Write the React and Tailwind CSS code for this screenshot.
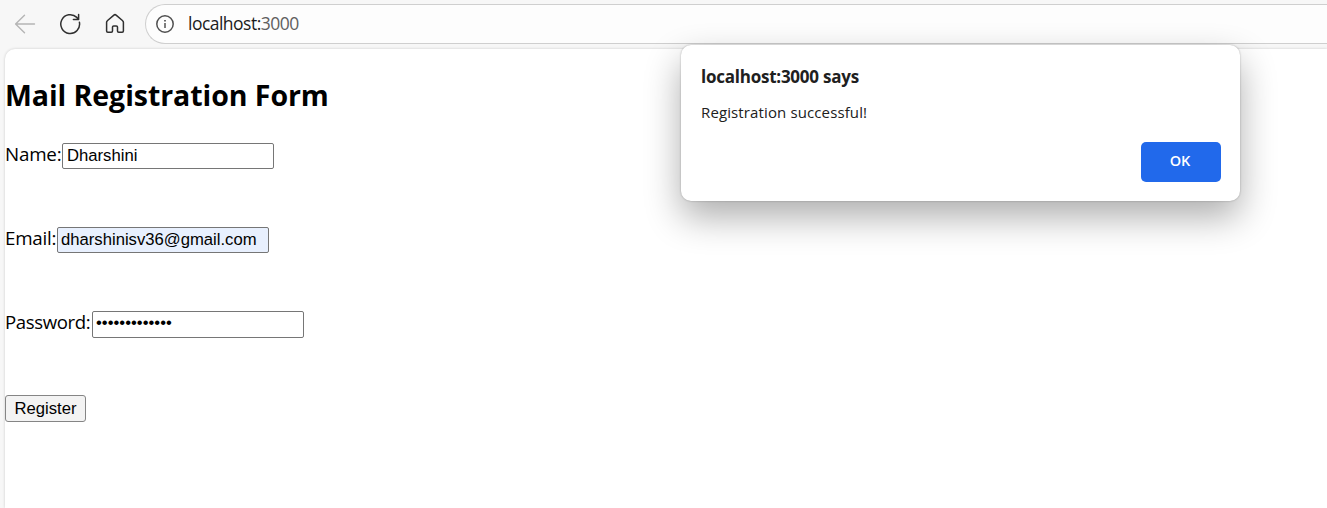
import React from "react";

function BrowserBar() {
  return (
    <header className="flex h-12 shrink-0 items-center">
      <div className="flex w-[145px] shrink-0 items-center">
        <svg className="ml-[14px] size-[22px]" viewBox="0 0 22 22" fill="none" stroke="#b5b5b5" strokeWidth="1.4" strokeLinecap="round" strokeLinejoin="round">
          <path d="M20.5 11H1.7M10.5 2.2l-8.9 8.8 8.9 8.8" />
        </svg>
        <svg className="ml-[23px] size-[22px]" viewBox="0 0 22 22" fill="none" stroke="#303030" strokeWidth="1.5" strokeLinecap="round" strokeLinejoin="round">
          <path d="M20.4 9.2A9.4 9.4 0 1 1 17.8 4.4l1.7 1.9M19.6 1.5v4.9h-5.2" />
        </svg>
        <svg className="ml-[23px] size-[22px]" viewBox="0 0 22 22" fill="none" stroke="#303030" strokeWidth="1.5" strokeLinejoin="round">
          <path d="M2.6 9.3c0-.6.2-1.1.7-1.5l6.6-5.7c.7-.6 1.5-.6 2.2 0l6.6 5.7c.5.4.7.9.7 1.5v8.7c0 .7-.5 1.2-1.2 1.2h-3.500c-.7 0-1.200-.5-1.200-1.200v-3.900c0-.7-.5-1.200-1.200-1.200H9.700c-.7 0-1.200.5-1.200 1.200v3.900c0 .7-.5 1.200-1.200 1.200H3.800c-.7 0-1.200-.5-1.200-1.200z" />
        </svg>
      </div>
      <div className="flex h-10 flex-1 items-center rounded-l-full border-y-[1.5px] border-l-[1.5px] border-[#cfcfcf] bg-[#fdfdfd] pl-[9px]">
        <svg className="size-5" viewBox="0 0 20 20" fill="none" stroke="#505050" strokeWidth="1.5">
          <circle cx="10" cy="10" r="8.2" />
          <path d="M10 9v5" />
          <path d="M10 6v1.6" strokeWidth="1.7" />
        </svg>
        <span className="relative -top-px ml-[13px] font-['Open_Sans',sans-serif] text-[17.5px] leading-6 tracking-[-0.52px] text-[#1b1b1b]">
          localhost:<span className="text-[#606060]">3000</span>
        </span>
      </div>
    </header>
  );
}

function Field({ label, labelClass, type = "text", value, inputClass }) {
  return (
    <label className="flex h-[84px] items-start">
      <span className={`-mt-px shrink-0 whitespace-nowrap font-['Open_Sans',sans-serif] leading-[24px] ${labelClass}`}>{label}</span>
      <input
        type={type}
        defaultValue={value}
        className={`w-[212px] rounded-[2px] border border-[#767676] pr-1 font-['Liberation_Sans',sans-serif] text-[16.67px] leading-5 outline-none ${inputClass}`}
      />
    </label>
  );
}

function AlertDialog() {
  return (
    <section role="alertdialog" className="absolute left-[681px] top-[45px] flex h-[156px] w-[559px] flex-col rounded-[10px] bg-white px-5 pt-5 font-['Open_Sans',sans-serif] text-[#202020] shadow-[0_0_2px_rgba(0,0,0,0.3),0_16px_36px_rgba(0,0,0,0.32)]">
      <h2 className="text-[17px] font-bold leading-6 tracking-[-0.24px]">localhost:3000 says</h2>
      <p className="mt-[11px] text-[15px] leading-6 tracking-[0.12px]">Registration successful!</p>
      <button className="mr-[-1px] mt-[18px] h-10 w-20 self-end rounded-[5px] bg-[#2169eb] pb-[2px] pr-[2px] text-[14.5px] font-semibold text-white">OK</button>
    </section>
  );
}

export default function App() {
  return (
    <div className="relative flex h-[508px] w-[1327px] flex-col overflow-hidden bg-[#f7f7f7]">
      <BrowserBar />
      <main className="ml-[5px] mt-px flex-1 rounded-tl-[10px] bg-white text-black shadow-[0_0_3px_rgba(0,0,0,0.18)]">
        <h1 className="pt-[26px] font-['Open_Sans',sans-serif] text-[28.5px] font-bold leading-[40px] tracking-[-0.06px]">Mail Registration Form</h1>
        <form className="pt-7" onSubmit={(e) => e.preventDefault()}>
          <Field label="Name:" labelClass="w-[57px] text-[18.8px] tracking-[-0.2px]" value="Dharshini" inputClass="h-[26px] bg-white pl-1" />
          <Field label="Email:" labelClass="w-[52px] text-[18.8px] tracking-[-0.25px]" type="email" value="dharshinisv36@gmail.com" inputClass="h-[26px] bg-[#e8f0fe] pl-[3px]" />
          <Field label="Password:" labelClass="w-[87px] text-[18.6px] tracking-[-0.38px]" type="password" value="registration1" inputClass="h-[27px] bg-white pb-[3px] pl-[3px]" />
          <button className="h-[27px] w-[81px] rounded-[3px] border border-[#858585] bg-[#f3f3f3] font-['Liberation_Sans',sans-serif] text-[16.67px] leading-5">Register</button>
        </form>
      </main>
      <AlertDialog />
    </div>
  );
}
